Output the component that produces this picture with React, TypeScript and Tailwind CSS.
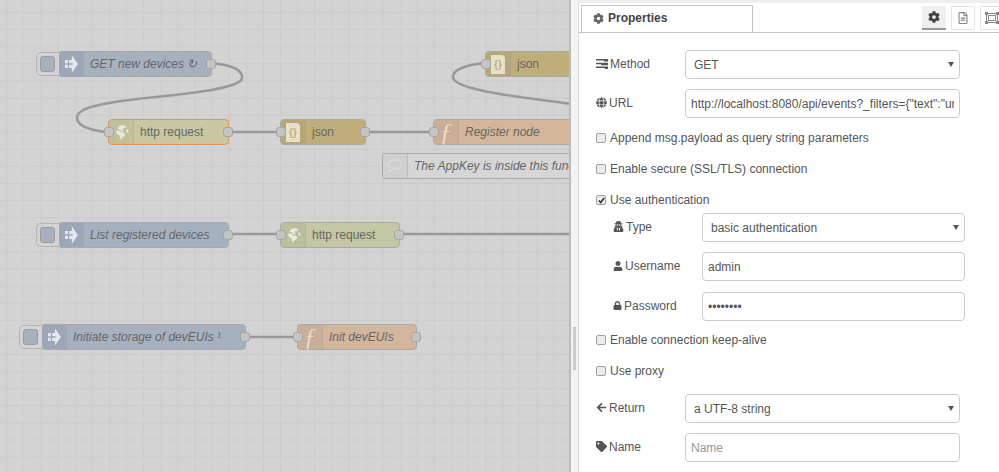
import type { ReactNode } from 'react'
import { FaCog, FaGlobe, FaArrowLeft, FaTag, FaUser, FaLock, FaUserSecret, FaRegFileAlt } from 'react-icons/fa'

const font = "[font-family:'Liberation_Sans',Arial,sans-serif]"

function InjectArrow() {
  return (
    <svg width="13" height="20" viewBox="0 0 11 17" fill="#e4e7eb">
      <path d="M0 5h2.500v2.800H0zM0 9.200h2.500V12H0zM3.500 5h2.300V1L11 8.500 5.800 16v-4H3.500V9.200h3V7.800h-3z" />
    </svg>
  )
}

function GlobeIcon() {
  return (
    <svg width="15" height="15" viewBox="0 0 15 15" fill="#e8e9db">
      <path d="M6 .6C8 0 11 .3 12.500 1.600L11 3.400 9.600 2.800 8.400 4.200 9.800 5.400 8.600 6.800 6.900 6 6.400 4.400 4.800 4.200 3.400 3.200z" />
      <path d="M2.600 5.600 5.200 5.400 7.600 7.600 10 7.800 11.400 9.300 10 11.800 8 12.400 7.400 14.400 5.800 13.200 5.800 10.800 3.600 9.600 2 7.600z" />
      <path d="M12.200 4.600 14 4.400 14.600 7.400 12.800 7.400z" />
    </svg>
  )
}

function JsonIcon() {
  return (
    <div className="flex h-[19px] w-[14px] items-center justify-center rounded-tr-[4px] bg-[#e6e0cd] text-[10px] font-bold text-[#c0ae7a]">
      {'{}'}
    </div>
  )
}

function FuncIcon() {
  return <span className="font-['Liberation_Serif'] text-[25px] italic leading-none text-[#e6dcd2]">ƒ</span>
}

function Port({ side }: { side: 'left' | 'right' }) {
  return (
    <span
      className={`absolute top-[7px] h-[10px] w-[10px] rounded-[3px] border border-[#a6a6a6] bg-[#c4c4c4] ${
        side === 'left' ? 'left-[-5px]' : 'right-[-5px]'
      }`}
    />
  )
}

type NodeProps = {
  place: string
  fill: string
  shade: string
  icon: ReactNode
  label: string
  italic?: boolean
  inPort?: boolean
  outPort?: boolean
  selected?: boolean
  button?: boolean
}

function FlowNode({ place, fill, shade, icon, label, italic, inPort, outPort, selected, button }: NodeProps) {
  return (
    <div
      className={`absolute flex h-[26px] items-center rounded-[4px] border ${place} ${fill} ${
        selected ? 'border-[#e5944a]' : 'border-[#a9a9a9]'
      }`}
    >
      {button && (
        <span className="absolute left-[-23px] top-0 flex h-[24px] w-[26px] items-center rounded-l-[5px] border border-[#b5b5b5] bg-[#d3d3d3] pl-[3px]">
          <span className="h-[16px] w-[15px] rounded-[3px] border border-[#9a9a9a] bg-[#a6b1c0]" />
        </span>
      )}
      <div className={`relative flex h-full w-[25px] shrink-0 items-center justify-center rounded-l-[3px] border-r border-[#a3a3a3]/40 ${shade}`}>
        {icon}
      </div>
      <span className={`mb-[1px] flex-1 truncate pl-[6px] text-[12px] text-[#666] ${italic ? 'italic' : ''}`}>{label}</span>
      {inPort && <Port side="left" />}
      {outPort && <Port side="right" />}
    </div>
  )
}

function Canvas() {
  const globe = <GlobeIcon />
  const arrow = <InjectArrow />
  return (
    <div className="relative h-full w-[571px] shrink-0 overflow-hidden border-r-2 border-[#bcbcbc] bg-[#d3d3d3]">
      <svg className="absolute inset-0" width="571" height="472">
        <defs>
          <pattern id="grid" x="6.4" y="12" width="17.1" height="17.1" patternUnits="userSpaceOnUse">
            <path d="M0 0h17.1M0 0v17.1" stroke="#c9c9c9" strokeWidth="1.4" fill="none" />
          </pattern>
        </defs>
        <rect width="571" height="472" fill="url(#grid)" />
        <g fill="none" stroke="#999" strokeWidth="2.6">
          <path d="M211 63C232 65 243 70 242 78C240 92 150 96 115 102C90 106 77 110 77 118C77 126 92 131 108 132" />
          <path d="M228 132H280" />
          <path d="M365 132H433" />
          <path d="M484 63C465 65 453 70 453 77C453 90 520 97 572 104" />
          <path d="M228 234H280" />
          <path d="M399 234H572" />
          <path d="M245 337H297" />
        </g>
      </svg>

      <FlowNode place="left-[58px] top-[51px] w-[154px]" fill="bg-[#a6b1c0]" shade="bg-[#9ba7b7]" icon={arrow} label="GET new devices ↻" italic outPort button />
      <FlowNode place="left-[108px] top-[119px] w-[121px]" fill="bg-[#c8c9a3]" shade="bg-[#c0c19b]" icon={globe} label="http request" inPort outPort selected />
      <FlowNode place="left-[280px] top-[119px] w-[86px]" fill="bg-[#c0ae7a]" shade="bg-[#b8a673]" icon={<JsonIcon />} label="json" inPort outPort />
      <FlowNode place="left-[433px] top-[119px] w-[150px]" fill="bg-[#d3b69c]" shade="bg-[#cbae95]" icon={<FuncIcon />} label="Register node" italic inPort />
      <FlowNode place="left-[485px] top-[51px] w-[100px]" fill="bg-[#c0ae7a]" shade="bg-[#b8a673]" icon={<JsonIcon />} label="json" inPort />
      <FlowNode
        place="left-[382px] top-[153px] w-[230px]"
        fill="bg-[#d6d6d6]"
        shade="bg-[#cfcfcf]"
        icon={
          <svg width="16" height="14" viewBox="0 0 16 14" fill="none" stroke="#e4e4e4" strokeWidth="1">
            <path d="M8 1c4 0 7 2 7 4.600S12 10 8 10c-.7 0-1.400 0-2-.2C5 11 3.500 12.500 1.500 13c1-1 1.500-2 1.500-3.700C1.800 8.500 1 7.200 1 5.600 1 3 4 1 8 1z" />
          </svg>
        }
        label="The AppKey is inside this function node"
        italic
      />
      <FlowNode place="left-[58px] top-[222px] w-[171px]" fill="bg-[#a6b1c0]" shade="bg-[#9ba7b7]" icon={arrow} label="List registered devices" italic outPort button />
      <FlowNode place="left-[280px] top-[222px] w-[120px]" fill="bg-[#c3c7a3]" shade="bg-[#bbbf9b]" icon={globe} label="http request" inPort outPort />
      <FlowNode place="left-[41px] top-[324px] w-[205px]" fill="bg-[#a6b1c0]" shade="bg-[#9ba7b7]" icon={arrow} label="Initiate storage of devEUIs ¹" italic outPort button />
      <FlowNode place="left-[297px] top-[324px] w-[120px]" fill="bg-[#d3b69c]" shade="bg-[#cbae95]" icon={<FuncIcon />} label="Init devEUIs" italic inPort outPort />
    </div>
  )
}

function Caret() {
  return (
    <svg width="6" height="5" viewBox="0 0 6 5" fill="#555">
      <path d="M0 0h6L3 5z" />
    </svg>
  )
}

function SelectBox({ value, width }: { value: string; width: string }) {
  return (
    <div className={`flex h-[29px] items-center justify-between rounded-[4px] border border-[#ccc] bg-white pl-[8px] pr-[5px] text-[#555] ${width}`}>
      <span>{value}</span>
      <Caret />
    </div>
  )
}

function TextBox({ value, width, type = 'text', placeholder }: { value?: string; width: string; type?: string; placeholder?: string }) {
  return (
    <input
      readOnly
      type={type}
      value={value}
      placeholder={placeholder}
      className={`h-[29px] rounded-[4px] border border-[#ccc] bg-white px-[5px] text-[#555] outline-none placeholder:text-[#999] ${width}`}
    />
  )
}

function CheckRow({ label, checked, className }: { label: string; checked?: boolean; className: string }) {
  return (
    <label className={`flex h-[18px] items-center gap-[4px] text-[#555] ${className}`}>
      <span className="flex h-[10px] w-[10px] items-center justify-center rounded-[2px] border border-[#a0a0a0] bg-[#ececec]">
        {checked && (
          <svg width="7" height="7" viewBox="0 0 7 7" fill="none" stroke="#333" strokeWidth="1.600">
            <path d="M.8 3.500 2.700 5.500 6.200 1" />
          </svg>
        )}
      </span>
      {label}
    </label>
  )
}

function Field({ icon, label, children, className }: { icon: ReactNode; label: string; children: ReactNode; className: string }) {
  return (
    <div className={`flex items-center ${className}`}>
      <div className="mb-[2px] flex w-[89px] items-center gap-[2px] text-[#555]">
        {icon}
        <span>{label}</span>
      </div>
      {children}
    </div>
  )
}

function Properties() {
  return (
    <div className={`flex h-full min-w-0 flex-1 flex-col overflow-hidden border-t-[3px] border-[#eeeeee] bg-white pt-[2px] text-[12px] ${font}`}>
      {/* Tabs */}
      <div className="flex h-[28px] shrink-0 items-start justify-between border-b border-[#c4c4c4] pl-[2px]">
        <div className="mb-[2px] flex h-[27px] w-[172px] items-center gap-[4px] rounded-t-[1px] border border-b-0 border-[#c4c4c4] bg-white pb-[2px] pl-[11px] font-bold text-[#444]">
          <FaCog size={11} color="#666" />
          Properties
        </div>
        <div className="mr-[-5px] flex gap-[5px]">
          <div className="mt-[1px] flex h-[24px] w-[24px] items-center justify-center border-b-2 border-[#999] bg-[#efefef]">
            <FaCog size={12} color="#444" />
          </div>
          <div className="mt-[1px] flex h-[24px] w-[24px] items-center justify-center rounded-[1px] border border-[#e4e4e4]">
            <FaRegFileAlt size={12} color="#888" />
          </div>
          <div className="mt-[1px] flex h-[24px] w-[24px] items-center justify-center rounded-[1px] border border-[#e4e4e4]">
            <svg width="14" height="12" viewBox="0 0 14 12" fill="none" stroke="#888" strokeWidth="1">
              <rect x="1.500" y="1.500" width="11" height="9" />
              <rect x="3.500" y="3.500" width="7" height="5" />
              <rect x=".5" y=".5" width="2" height="2" fill="#888" />
              <rect x="11.500" y=".5" width="2" height="2" fill="#888" />
              <rect x=".5" y="9.500" width="2" height="2" fill="#888" />
              <rect x="11.500" y="9.500" width="2" height="2" fill="#888" />
            </svg>
          </div>
        </div>
      </div>

      {/* Form */}
      <div className="flex flex-col pl-[17px]">
        <Field
          className="mt-[17px]"
          label="Method"
          icon={
            <svg width="12" height="10" viewBox="0 0 12 10" fill="#555">
              <path d="M0 0h12v2.500H8V1.500H0zM0 3.700h12v2.500H5V5.200H0zM0 7.500h12V10H9V9H0z" />
            </svg>
          }
        >
          <SelectBox value="GET" width="w-[275px]" />
        </Field>
        <Field className="mt-[10px]" label="URL" icon={<FaGlobe size={11} color="#555" />}>
          <TextBox value={'http://localhost:8080/api/events?_filters={"text":"unregistered"}'} width="w-[275px]" />
        </Field>
        <CheckRow label="Append msg.payload as query string parameters" className="mt-[11px]" />
        <CheckRow label="Enable secure (SSL/TLS) connection" className="mt-[13px]" />
        <CheckRow label="Use authentication" checked className="mt-[13px]" />
        <div className="flex flex-col pl-[17px]">
          <Field className="mt-[4px]" label="Type" icon={<FaUserSecret size={11} color="#555" />}>
            <SelectBox value="basic authentication" width="w-[263px]" />
          </Field>
          <Field className="mt-[10px]" label="Username" icon={<FaUser size={10} color="#555" />}>
            <TextBox value="admin" width="w-[263px]" />
          </Field>
          <Field className="mt-[11px]" label="Password" icon={<FaLock size={9} color="#555" />}>
            <TextBox value="password" type="password" width="w-[263px]" />
          </Field>
        </div>
        <CheckRow label="Enable connection keep-alive" className="mt-[10px]" />
        <CheckRow label="Use proxy" className="mt-[13px]" />
        <Field className="mt-[14px]" label="Return" icon={<FaArrowLeft size={11} color="#555" />}>
          <SelectBox value="a UTF-8 string" width="w-[275px]" />
        </Field>
        <Field className="mt-[10px]" label="Name" icon={<FaTag size={11} color="#555" />}>
          <TextBox placeholder="Name" width="w-[275px]" />
        </Field>
      </div>
    </div>
  )
}

export default function App() {
  return (
    <div className={`flex h-[472px] w-[999px] overflow-hidden bg-white ${font}`}>
      <Canvas />
      {/* Sash between workspace and sidebar */}
      <div className="relative h-full w-[8px] shrink-0 border-r border-[#dcdcdc] bg-[#f3f3f3]">
        <span className="absolute left-[2px] top-[327px] h-[43px] w-[3px] border border-[#c4c4c4] bg-[#d6d6d6]" />
      </div>
      <Properties />
    </div>
  )
}
